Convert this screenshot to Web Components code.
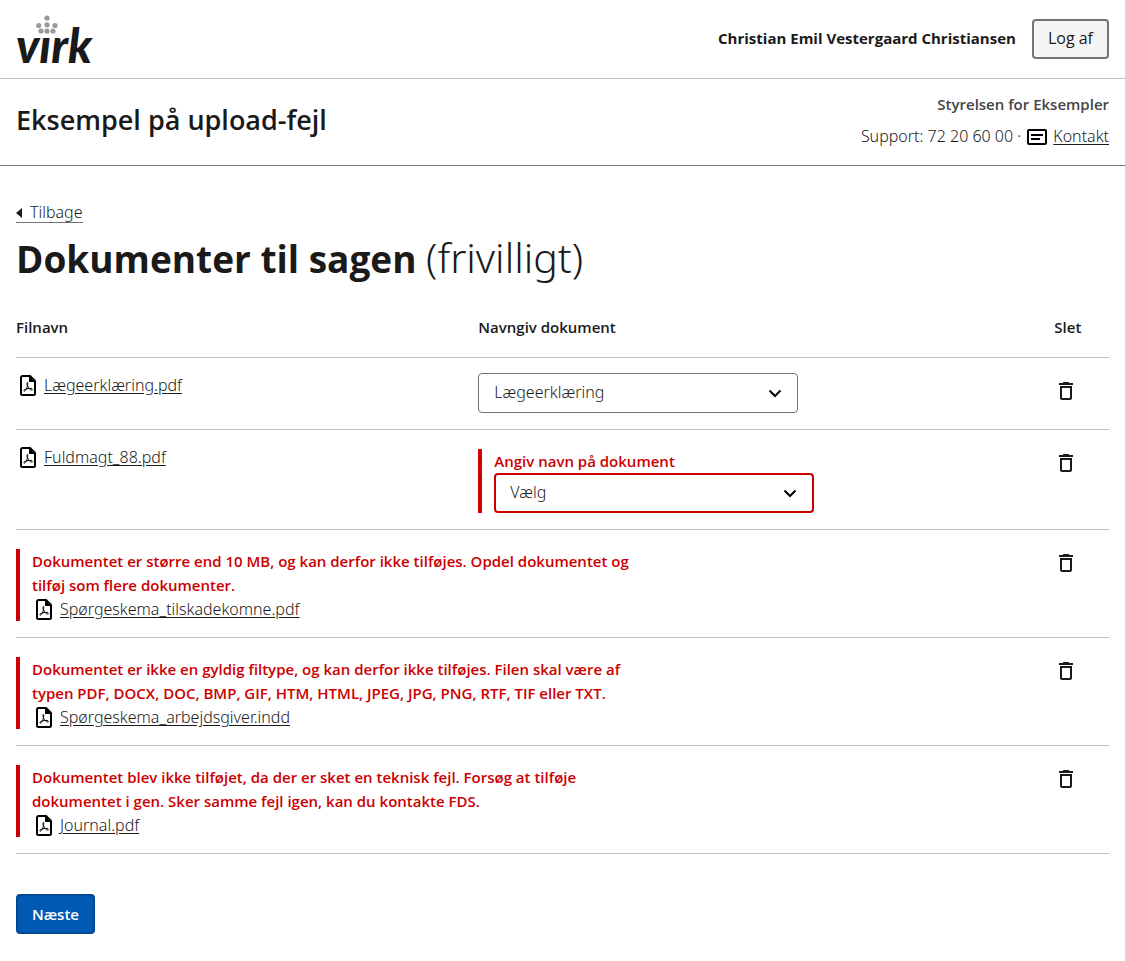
<!DOCTYPE html>
<html lang="da">
<head>
<meta charset="utf-8">
<meta name="viewport" content="width=device-width, initial-scale=1">
<title>Dokumenter til sagen</title>
<style>
  body {
    margin: 0;
    background: #fff;
    color: #1a1a1a;
    font: 300 16px/24px "Noto Sans", "Open Sans", sans-serif;
    --strong-font: "Open Sans", "Noto Sans", sans-serif;
    --gutter: 16px;
    --line: #bfbfbf;
    --dark-line: #747474;
    --error: #cc0000;
  }
</style>
</head>
<body>
<virk-app></virk-app>

<script>
  function define(name, html, setup) {
    const template = document.createElement('template');
    template.innerHTML = html;
    customElements.define(name, class extends HTMLElement {
      constructor() {
        super();
        this.attachShadow({ mode: 'open' }).append(template.content.cloneNode(true));
      }
      connectedCallback() {
        if (setup) setup(this, this.shadowRoot);
      }
    });
  }

  define('virk-logo', `
    <style>
      :host { display: block; }
      a { display: block; color: inherit; }
      svg { display: block; }
      text { font: italic 900 47px Lato, sans-serif; fill: currentColor; }
    </style>
    <a href="#" aria-label="virk">
      <svg width="80" height="70" viewBox="0 -10 80 70" aria-hidden="true">
        <g fill="#999">
          <circle cx="31" cy="4" r="2.6"/>
          <circle cx="22.7" cy="11.5" r="2.6"/>
          <circle cx="31" cy="10.8" r="2.6"/>
          <circle cx="39" cy="11.5" r="2.6"/>
          <circle cx="25" cy="17" r="2.6"/>
          <circle cx="31" cy="17" r="2.6"/>
          <circle cx="37" cy="17" r="2.6"/>
        </g>
        <text x="0" y="49">v\u0131rk</text>
      </svg>
    </a>`);

  define('user-bar', `
    <style>
      :host { display: block; border-bottom: 1px solid var(--line); }
      header { display: flex; align-items: center; justify-content: space-between; padding: 4px var(--gutter); }
      .user { display: flex; align-items: baseline; gap: 16px; }
      .name { font: 700 15px/24px var(--strong-font); }
      button {
        font: 400 16px/24px var(--strong-font); color: inherit; height: 40px; padding: 0 14px 2px;
        background: #f5f5f5; border: 2px solid var(--dark-line); border-radius: 4px;
      }
    </style>
    <header>
      <virk-logo></virk-logo>
      <div class="user">
        <span class="name"><slot></slot></span>
        <button type="button">Log af</button>
      </div>
    </header>`);

  define('solution-bar', `
    <style>
      :host { display: block; border-bottom: 1px solid var(--dark-line); }
      .bar { display: flex; align-items: center; justify-content: space-between; padding: 13px var(--gutter) 17px; }
      .title { font: 600 27px/36px var(--strong-font); }
      .contact { display: flex; flex-direction: column; align-items: flex-end; gap: 8px; }
      .authority { font: 600 15px/24px var(--strong-font); color: #454545; }
      .support { display: flex; align-items: center; gap: 4px; }
      svg { display: block; }
      a { color: inherit; text-underline-offset: 2px; }
    </style>
    <div class="bar">
      <div class="title"><slot></slot></div>
      <div class="contact">
        <span class="authority"><slot name="authority"></slot></span>
        <span class="support">
          <span>Support: <slot name="phone"></slot> ·</span>
          <svg width="24" height="24" viewBox="0 0 24 24" fill="none" stroke="#000" stroke-width="2" aria-hidden="true">
            <rect x="3" y="6" width="18" height="14" rx="1"/>
            <path d="M6 11h12M6 15h9"/>
          </svg>
          <a href="#kontakt">Kontakt</a>
        </span>
      </div>
    </div>`);

  define('back-link', `
    <style>
      :host { display: block; }
      a {
        display: inline-flex; align-items: center; gap: 8px; line-height: 20px;
        color: inherit; text-decoration: none; border-bottom: 1px solid var(--dark-line);
      }
      svg { display: block; margin-top: 3px; }
    </style>
    <a href="#tilbage">
      <svg width="6" height="10" viewBox="0 0 6 10" aria-hidden="true"><path d="M6 0v10L0 5z" fill="#1a1a1a"/></svg>
      <slot></slot>
    </a>`);

  define('file-link', `
    <style>
      :host { display: flex; align-items: center; gap: 4px; }
      svg { display: block; flex: none; }
      a { color: inherit; text-underline-offset: 2px; }
    </style>
    <svg width="24" height="24" viewBox="0 0 24 24" aria-hidden="true">
      <path d="M14 3H6.5C5.700 3 5 3.700 5 4.500v16c0 .8.7 1.500 1.500 1.500h11c.8 0 1.500-.7 1.500-1.500V8" fill="none" stroke="#000" stroke-width="2"/>
      <path d="M13 2h1.500L20 7.500V9h-7z" fill="#000"/>
      <path d="M11.400 9.500c-.8 0-.5 2 .2 3.500 1 2.200 2.700 4 4.200 4 1.300 0 .9-1.700-1.800-1.600-2.600.1-6.200 1-6.200 2.200 0 1.300 1.700.3 2.800-2.100.9-2 1.600-6 .8-6z" fill="none" stroke="#000" stroke-width="1"/>
    </svg>
    <a href="#fil"><slot></slot></a>`);

  define('error-box', `
    <style>
      :host { display: block; border-left: 4px solid var(--error); padding-left: 12px; }
      .message { max-width: 624px; color: var(--error); font: 600 15px/24px var(--strong-font); }
    </style>
    <div class="message"><slot name="message"></slot></div>
    <slot></slot>`);

  define('name-select', `
    <style>
      :host { display: grid; width: 320px; max-width: 100%; align-items: center; }
      select {
        grid-area: 1 / 1; appearance: none; box-sizing: border-box; width: 100%; height: 40px; margin: 0;
        padding: 0 40px 2px 15px; font: inherit; color: inherit; background: #fff;
        border: 1px solid var(--dark-line); border-radius: 4px;
      }
      svg { grid-area: 1 / 1; justify-self: end; margin-right: 11px; pointer-events: none; }
      :host([invalid]) select { border: 2px solid var(--error); padding-left: 14px; }
      :host([invalid]) svg { margin-right: 12px; }
    </style>
    <select><option></option></select>
    <svg width="24" height="24" viewBox="0 0 24 24" fill="none" stroke="#000" stroke-width="2" aria-hidden="true">
      <path d="M6.500 9.500 12 15l5.500-5.500"/>
    </svg>`, (host, root) => {
    root.querySelector('select').setAttribute('aria-label', host.getAttribute('label'));
    root.querySelector('option').textContent = host.getAttribute('value');
  });

  define('delete-button', `
    <style>
      :host { display: block; }
      button { display: block; margin: 0; padding: 0; border: 0; background: none; color: inherit; }
      svg { display: block; }
    </style>
    <button type="button" aria-label="Slet">
      <svg width="24" height="24" viewBox="0 0 24 24" aria-hidden="true">
        <path d="M6 19c0 1.100.9 2 2 2h8c1.100 0 2-.9 2-2V7H6v12zM8 9h8v10H8V9zm7.500-5-1-1h-5l-1 1H5v2h14V4h-3.500z" fill="currentColor"/>
      </svg>
    </button>`);

  define('document-table', `
    <style>
      :host { display: block; }
      table { width: 100%; table-layout: fixed; border-collapse: collapse; }
      .file { width: 42.3%; }
      .delete { width: 5%; }
      th { text-align: left; padding: 0 0 18px; font: 600 15px/24px var(--strong-font); }
      tr { border-bottom: 1px solid var(--line); }
      td { vertical-align: top; padding: 15px 0 16px; }
      td.error { padding-top: 19px; }
      td.action { padding-top: 21px; }
    </style>
    <table>
      <thead>
        <tr><th class="file" scope="col">Filnavn</th><th scope="col">Navngiv dokument</th><th class="delete" scope="col">Slet</th></tr>
      </thead>
      <tbody>
        <tr>
          <td><file-link>Lægeerklæring.pdf</file-link></td>
          <td><name-select label="Navngiv dokument" value="Lægeerklæring"></name-select></td>
          <td class="action"><delete-button></delete-button></td>
        </tr>
        <tr>
          <td><file-link>Fuldmagt_88.pdf</file-link></td>
          <td class="error">
            <error-box>
              <span slot="message">Angiv navn på dokument</span>
              <name-select invalid label="Angiv navn på dokument" value="Vælg"></name-select>
            </error-box>
          </td>
          <td class="action"><delete-button></delete-button></td>
        </tr>
        <tr>
          <td class="error" colspan="2">
            <error-box>
              <span slot="message">Dokumentet er større end 10 MB, og kan derfor ikke tilføjes. Opdel dokumentet og tilføj som flere dokumenter.</span>
              <file-link>Spørgeskema_tilskadekomne.pdf</file-link>
            </error-box>
          </td>
          <td class="action"><delete-button></delete-button></td>
        </tr>
        <tr>
          <td class="error" colspan="2">
            <error-box>
              <span slot="message">Dokumentet er ikke en gyldig filtype, og kan derfor ikke tilføjes. Filen skal være af typen PDF, DOCX, DOC, BMP, GIF, HTM, HTML, JPEG, JPG, PNG, RTF, TIF eller TXT.</span>
              <file-link>Spørgeskema_arbejdsgiver.indd</file-link>
            </error-box>
          </td>
          <td class="action"><delete-button></delete-button></td>
        </tr>
        <tr>
          <td class="error" colspan="2">
            <error-box>
              <span slot="message">Dokumentet blev ikke tilføjet, da der er sket en teknisk fejl. Forsøg at tilføje dokumentet i gen. Sker samme fejl igen, kan du kontakte FDS.</span>
              <file-link>Journal.pdf</file-link>
            </error-box>
          </td>
          <td class="action"><delete-button></delete-button></td>
        </tr>
      </tbody>
    </table>`);

  define('primary-button', `
    <style>
      :host { display: block; }
      button {
        height: 40px; padding: 0 14px; color: #fff; background: #0059b3;
        font: 600 15px/24px var(--strong-font);
        border: 2px solid #004993; border-radius: 4px;
      }
    </style>
    <button type="button"><slot></slot></button>`);

  define('virk-app', `
    <style>
      :host { display: block; }
      main { padding: 34px var(--gutter) 28px; }
      h1 { margin: 8px 0 31px; font: 700 37px/50px var(--strong-font); }
      h1 span { font-family: "Noto Sans", sans-serif; font-size: 41px; font-weight: 300; }
      primary-button { margin-top: 40px; }
    </style>
    <user-bar>Christian Emil Vestergaard Christiansen</user-bar>
    <solution-bar>
      Eksempel på upload-fejl
      <span slot="authority">Styrelsen for Eksempler</span>
      <span slot="phone">72 20 60 00</span>
    </solution-bar>
    <main>
      <back-link>Tilbage</back-link>
      <h1>Dokumenter til sagen <span>(frivilligt)</span></h1>
      <document-table></document-table>
      <primary-button>Næste</primary-button>
    </main>`);
</script>
</body>
</html>
